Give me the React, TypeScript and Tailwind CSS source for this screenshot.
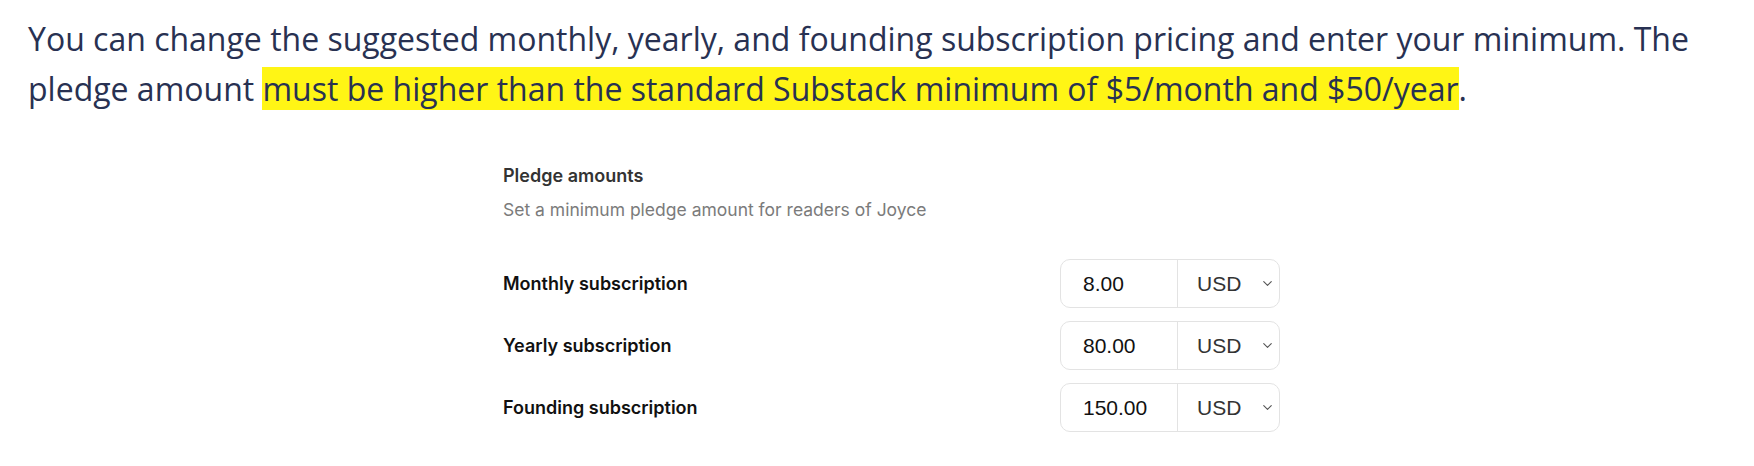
import { ChevronDown } from 'lucide-react';

const ROWS = [
  { label: 'Monthly subscription', value: '8.00' },
  { label: 'Yearly subscription', value: '80.00' },
  { label: 'Founding subscription', value: '150.00' },
];

export default function App() {
  return (
    <div className="w-[1754px] h-[466px] bg-white overflow-hidden">
      {/* Intro copy */}
      <p className="pt-[14px] pl-[28px] pr-[40px] text-[32px] leading-[50px] text-[#283152] font-['Open_Sans',sans-serif]">
        You can change the suggested monthly, yearly, and founding subscription pricing and enter your minimum. The
        pledge amount <mark className="bg-[#fff515] text-[#283152]">must be higher than the standard Substack minimum of $5/month and $50/year</mark>.
      </p>

      {/* Pledge settings */}
      <div className="ml-[503px] mt-[51px] w-[777px] font-['Inter',sans-serif]">
        <h3 className="text-[18px] font-semibold text-[#333] leading-[22px]">Pledge amounts</h3>
        <p className="mt-[12px] text-[17.5px] text-[#7b7b7b] leading-[22px]">Set a minimum pledge amount for readers of Joyce</p>

        <div className="mt-[38px] flex flex-col gap-[13px]">
          {ROWS.map(r => (
            <div key={r.label} className="flex items-center justify-between">
              <span className="text-[18px] font-semibold text-[#111]">{r.label}</span>
              <div className="flex h-[49px] w-[220px] rounded-[10px] border border-[#e3e3e3] font-['Liberation_Sans',sans-serif]">
                <div className="w-[117px] flex items-center pl-[22px] text-[21px] text-[#111] border-r border-[#e3e3e3]">
                  {r.value}
                </div>
                <div className="flex-1 flex items-center pl-[19px] text-[21px] text-[#333]">
                  USD
                  <ChevronDown size={15} strokeWidth={1.75} className="ml-auto mr-[4px] text-[#555]" />
                </div>
              </div>
            </div>
          ))}
        </div>
      </div>
    </div>
  );
}
